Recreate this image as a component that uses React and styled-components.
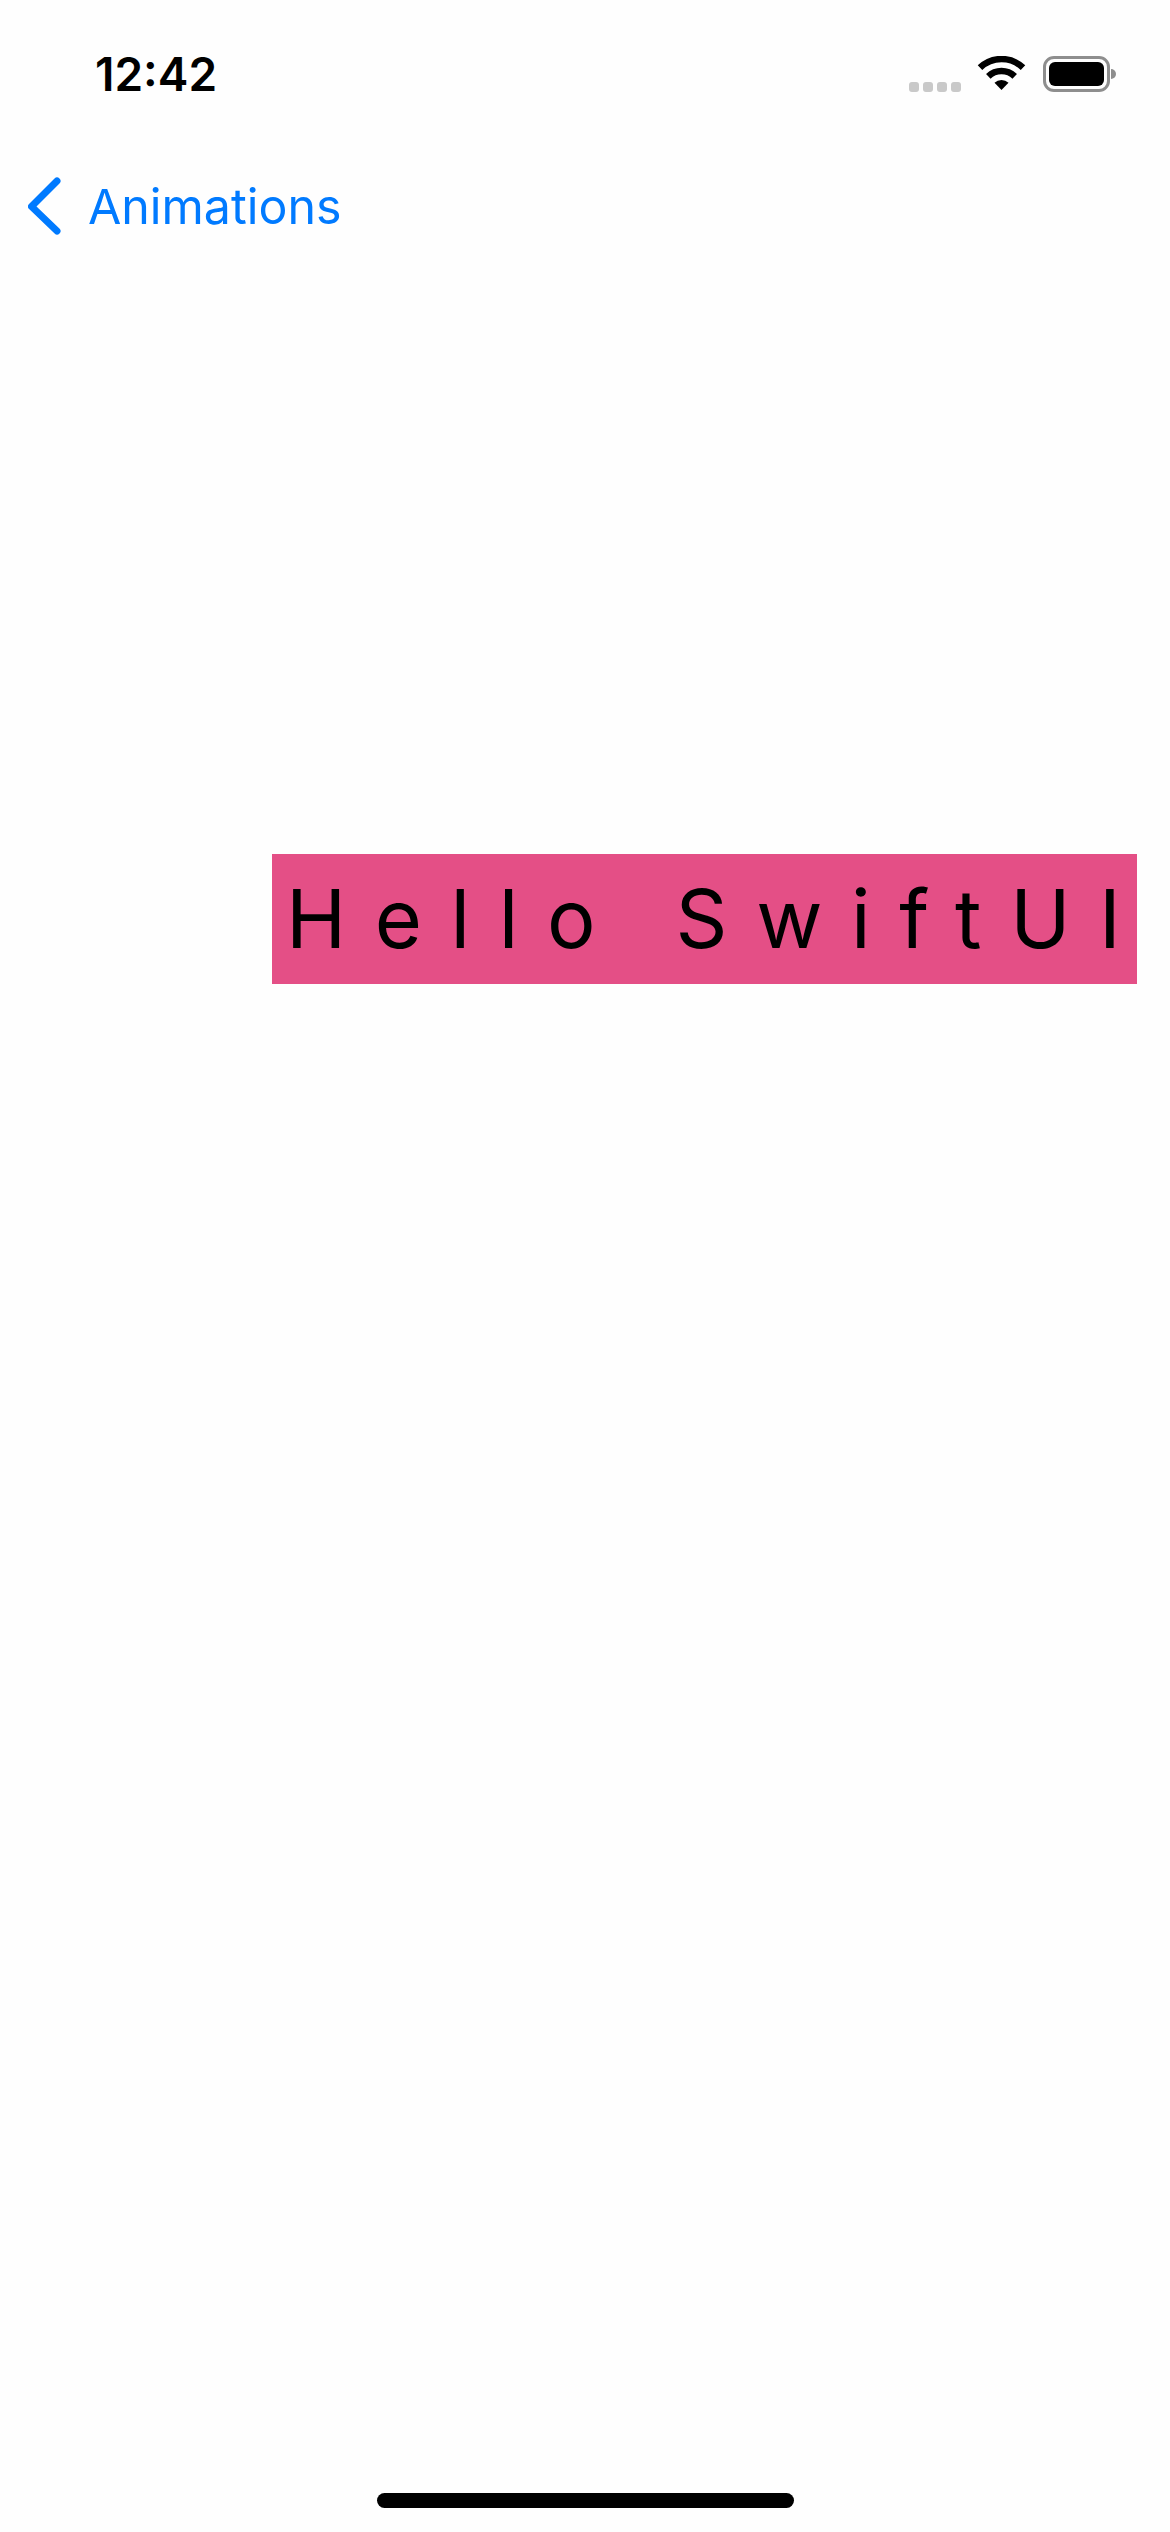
import React from 'react';
import styled, { createGlobalStyle } from 'styled-components';

const Global = createGlobalStyle`
html, body {
  margin: 0;
  padding: 0;
  background: #fff;
}
`;

const Page = styled.div`
  width: 1170px;
  height: 2532px;
  display: flex;
  flex-direction: column;
  overflow: hidden;
  background: #fefefe;
  font-family: Inter, "Liberation Sans", sans-serif;
`;

const StatusBar = styled.div`
  height: 160px;
  flex: none;
  display: flex;
  justify-content: space-between;
  align-items: flex-start;
  padding: 0 60px 0 95px;
  box-sizing: border-box;
`;

const Time = styled.div`
  font-size: 46px;
  font-weight: 600;
  line-height: 54px;
  margin-top: 47px;
  color: #000;
`;

const StatusIcons = styled.div`
  display: flex;
  align-items: flex-start;
  margin-top: 56px;
`;

const Dots = styled.div`
  display: flex;
  gap: 4px;
  margin-top: 26px;
  margin-right: 16px;
`;

const Dot = styled.span`
  width: 10px;
  height: 10px;
  border-radius: 3px;
  background: #c9c9c9;
`;

const Battery = styled.div`
  width: 67px;
  height: 36px;
  margin-left: 17px;
  box-sizing: border-box;
  padding: 3px;
  border: 3px solid #8e8e8e;
  border-radius: 11px;
  position: relative;
  &::after {
    content: "";
    position: absolute;
    left: 65px;
    top: 10px;
    width: 5px;
    height: 10px;
    background: #8e8e8e;
    border-radius: 0 5px 5px 0;
  }
`;

const BatteryFill = styled.div`
  height: 100%;
  background: #000;
  border-radius: 6px;
`;

const NavBar = styled.div`
  flex: none;
  height: 94px;
  display: flex;
  align-items: center;
  padding-left: 28px;
  color: #007aff;
`;

const BackLabel = styled.span`
  font-size: 48.3px;
  font-weight: 400;
  line-height: 58px;
  margin-left: 27px;
`;

const Banner = styled.div`
  flex: none;
  width: 865px;
  height: 130px;
  margin: 600px 0 0 272px;
  background: #e44f86;
  color: #000;
  box-sizing: border-box;
  padding-left: 14px;
  display: flex;
  align-items: center;
  font-size: 81px;
  font-weight: 400;
  letter-spacing: 28.6px;
  white-space: pre;
`;

const HomeBar = styled.div`
  flex: none;
  width: 417px;
  height: 15px;
  margin: auto 0 24px 377px;
  border-radius: 8px;
  background: #000;
`;

const Wifi = () => (
  <svg width="49" height="35" viewBox="0 0 49 35" fill="none">
    <path d="M3 11.7A31 31 0 0 1 46 11.7" stroke="#000" strokeWidth="6.5" />
    <path d="M11.3 20.3A19 19 0 0 1 37.7 20.3" stroke="#000" strokeWidth="6.5" />
    <path d="M17.5 26.8A10 10 0 0 1 31.5 26.8L24.5 34Z" fill="#000" />
  </svg>
);

const Chevron = () => (
  <svg width="33" height="60" viewBox="0 0 33 60" fill="none">
    <path d="M29 4L3.5 29.5L29 54" stroke="#007aff" strokeWidth="7" strokeLinecap="round" strokeLinejoin="round" />
  </svg>
);

export default function App() {
  return (
    <Page>
      <Global />
      <StatusBar>
        <Time>12:42</Time>
        <StatusIcons>
          <Dots>
            {[0, 1, 2, 3].map(i => <Dot key={i} />)}
          </Dots>
          <Wifi />
          <Battery><BatteryFill /></Battery>
        </StatusIcons>
      </StatusBar>
      <NavBar>
        <Chevron />
        <BackLabel>Animations</BackLabel>
      </NavBar>
      <Banner>Hello SwiftUI</Banner>
      <HomeBar />
    </Page>
  );
}
